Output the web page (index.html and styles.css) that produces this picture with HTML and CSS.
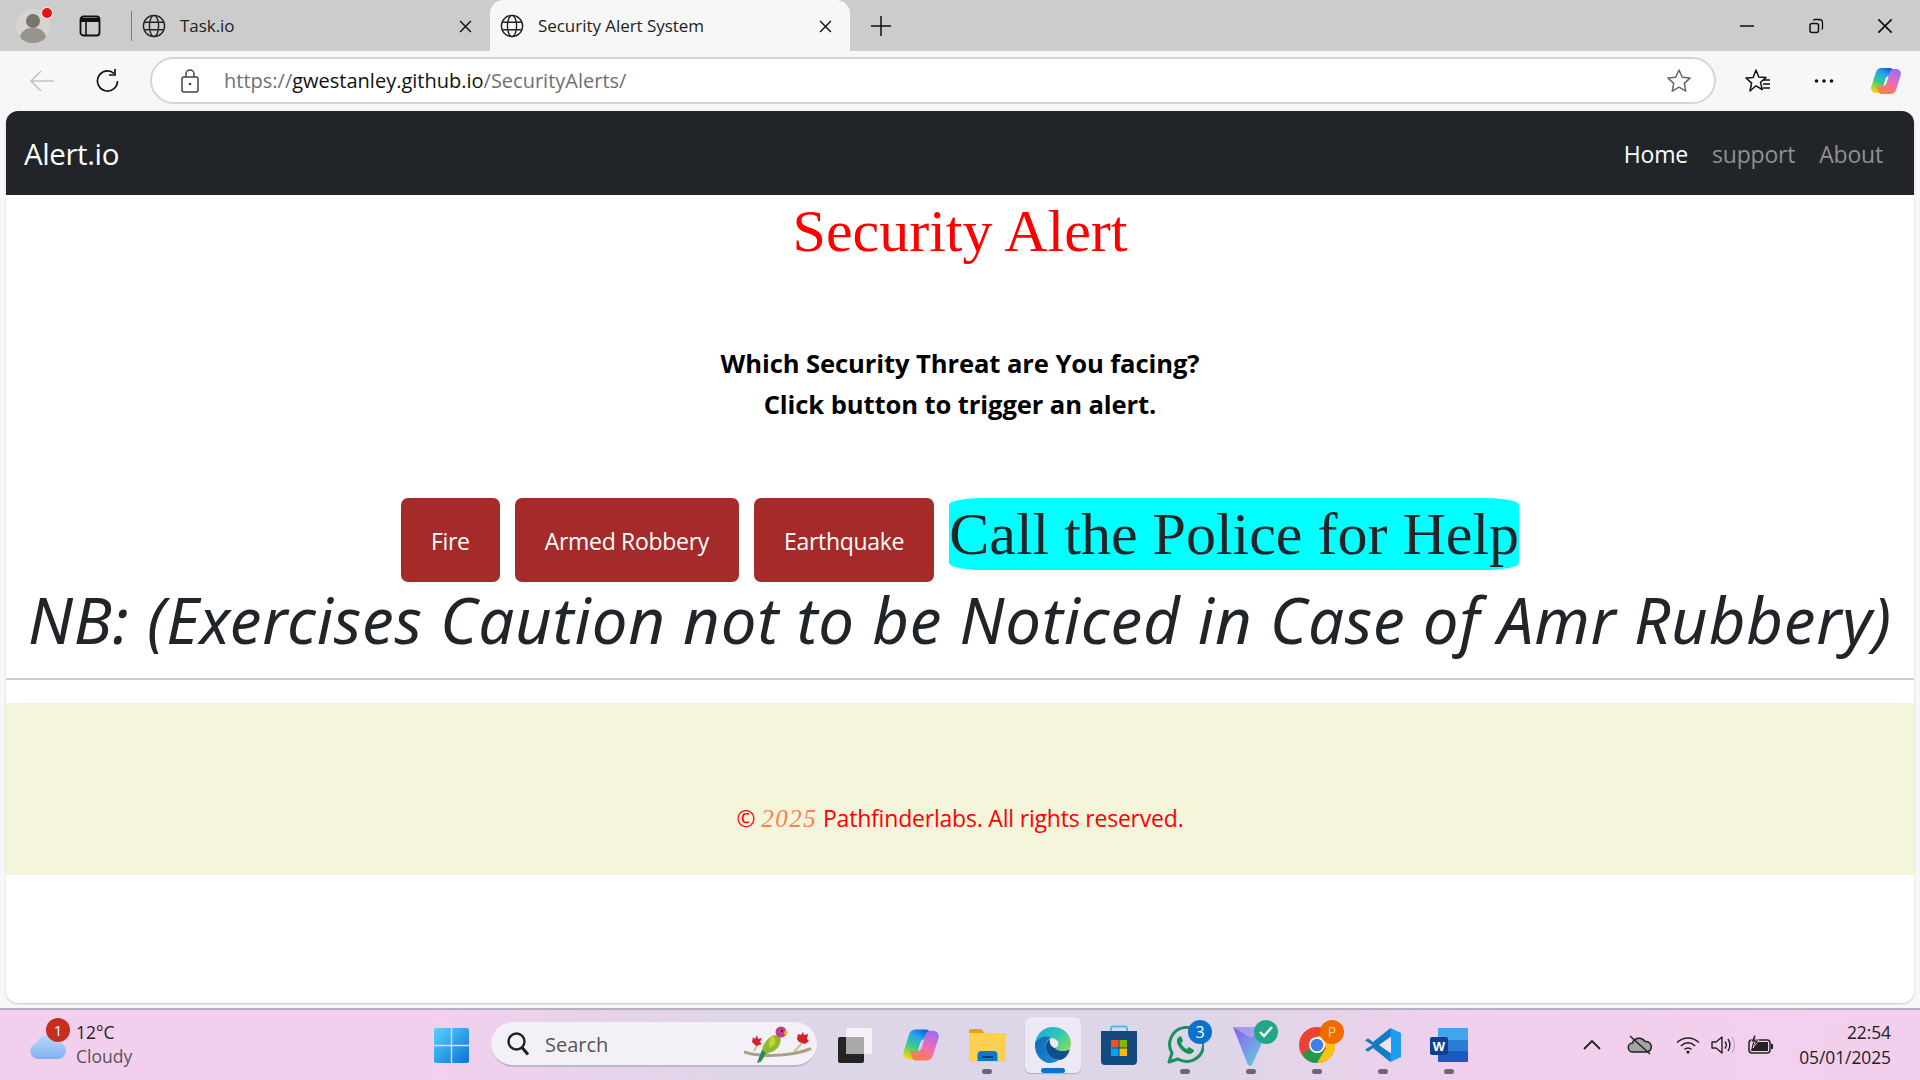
FILE: index.html
```html
<!DOCTYPE html>
<html lang="en">
<head>
<meta charset="utf-8">
<title>Security Alert System</title>
<link rel="stylesheet" href="styles.css">
</head>
<body>
<svg class="defs" width="0" height="0">
  <symbol id="globe" viewBox="0 0 24 24"><g fill="none" stroke="#222" stroke-width="1.4"><circle cx="12" cy="12" r="10.6"/><ellipse cx="12" cy="12" rx="4.6" ry="10.6"/><path d="M2.2 8.2h19.6M2.2 15.8h19.6"/></g></symbol>
  <symbol id="x" viewBox="0 0 12 12"><path d="M1 1l10 10M11 1L1 11" stroke="#111" stroke-width="1.3" fill="none"/></symbol>
  <linearGradient id="cp1" x1=".2" y1="1" x2=".7" y2="0"><stop offset="0" stop-color="#f7d708"/><stop offset=".4" stop-color="#3ec98a"/><stop offset=".75" stop-color="#22a5ee"/><stop offset="1" stop-color="#1261d6"/></linearGradient>
  <linearGradient id="cp2" x1=".7" y1="0" x2=".3" y2="1"><stop offset="0" stop-color="#9f6cf0"/><stop offset=".55" stop-color="#ef6fb0"/><stop offset="1" stop-color="#f8803a"/></linearGradient>
  <symbol id="copilot" viewBox="0 0 32 32"><path d="M12 3h8c2 0 3 1 3.500 2.500L25 11h-5c-2.500 0-4 1-4.600 3.200L12.500 24c-.8 2.800-2.500 4-4.500 4H6c-3.500 0-5.500-3-4.800-6L6 7c.8-2.500 3-4 6-4z" fill="url(#cp1)"/><path d="M20 29h-8c-2 0-3-1-3.500-2.500L7 21h5c2.500 0 4-1 4.600-3.200L19.500 8c.8-2.800 2.500-4 4.500-4h2c3.500 0 5.500 3 4.800 6L26 25c-.8 2.500-3 4-6 4z" fill="url(#cp2)"/></symbol>
</svg>

<header class="tabstrip">
  <div class="avatar">
    <svg width="36" height="36" viewBox="0 0 36 36"><circle cx="18" cy="18" r="17" fill="#d7d4cf"/><circle cx="18" cy="13" r="7" fill="#79746e"/><path d="M5 29c2-8 8-9 13-9s11 1 13 9c-3 4-8 6-13 6s-10-2-13-6z" fill="#98938d"/></svg>
    <span class="dot-red"></span>
  </div>
  <div class="sidebar-btn"><svg width="22" height="22" viewBox="0 0 22 22"><rect x="1.500" y="1.500" width="19" height="19" rx="3" fill="none" stroke="#111" stroke-width="1.800"/><path d="M2 3h18v4H2z" fill="#111"/><path d="M7 7v13" stroke="#111" stroke-width="1.600"/></svg></div>
  <span class="tab-divider"></span>
  <div class="tab">
    <svg class="tab-globe"><use href="#globe"/></svg><span class="tab-title">Task.io</span><svg class="tab-x"><use href="#x"/></svg>
  </div>
  <div class="tab tab-active">
    <svg class="tab-globe"><use href="#globe"/></svg><span class="tab-title">Security Alert System</span><svg class="tab-x"><use href="#x"/></svg>
  </div>
  <div class="newtab"><svg width="22" height="22" viewBox="0 0 22 22"><path d="M11 1v20M1 11h20" stroke="#111" stroke-width="1.500"/></svg></div>
  <div class="winctl">
    <span class="wc"><svg width="14" height="14" viewBox="0 0 14 14"><path d="M0 7h14" stroke="#111" stroke-width="1.500"/></svg></span>
    <span class="wc"><svg width="16" height="16" viewBox="0 0 16 16"><rect x="2" y="5.500" width="8.500" height="9" rx="2" fill="none" stroke="#111" stroke-width="1.500"/><path d="M5.500 2.500c0-.7.600-1 1.200-1H11c2 0 3.500 1.500 3.500 3.500v5c0 .7-.4 1.200-1 1.200" fill="none" stroke="#111" stroke-width="1.300"/></svg></span>
    <span class="wc"><svg width="16" height="16"><use href="#x"/></svg></span>
  </div>
</header>

<div class="toolbar">
  <span class="tb-btn tb-back"><svg width="26" height="24" viewBox="0 0 26 24"><path d="M25 12H2M12 2L2 12l10 10" fill="none" stroke="#c3c3c3" stroke-width="1.600"/></svg></span>
  <span class="tb-btn tb-reload"><svg width="26" height="26" viewBox="0 0 26 26"><path d="M22.500 13a10 10 0 1 1-3.500-7.600" fill="none" stroke="#111" stroke-width="1.700"/><path d="M20 1v6h-6" fill="none" stroke="#111" stroke-width="1.700"/></svg></span>
  <div class="addressbar">
    <svg class="lock" width="20" height="24" viewBox="0 0 20 24"><rect x="2" y="8" width="16" height="15" rx="2" fill="none" stroke="#444" stroke-width="1.500"/><path d="M6 8V5a4 4 0 0 1 8 0v3" fill="none" stroke="#444" stroke-width="1.500"/><circle cx="10" cy="15" r="1.300" fill="#444"/></svg>
    <span class="url"><span class="url-dim">https://</span>gwestanley.github.io<span class="url-dim">/SecurityAlerts/</span></span>
    <svg class="star" width="26" height="26" viewBox="0 0 26 26"><path d="M13 2l3.300 7.200 7.700.9-5.700 5.300 1.500 7.700L13 19.200l-6.800 3.900 1.500-7.700L2 10.100l7.700-.9z" fill="none" stroke="#666" stroke-width="1.500" stroke-linejoin="round"/></svg>
  </div>
  <span class="tb-btn tb-fav"><svg width="26" height="26" viewBox="0 0 26 26"><path d="M11 2l2.800 7 7.200.6-5.500 4.700 1.700 7.200L11 17.800 5 23l1.600-7.900L1 10l7.200-.6z" fill="none" stroke="#111" stroke-width="1.500" stroke-linejoin="round"/><path d="M18 12h7M18 16h7M18 20h7" stroke="#111" stroke-width="1.500"/></svg></span>
  <span class="tb-btn tb-more"><svg width="20" height="6" viewBox="0 0 20 6"><circle cx="2.500" cy="3" r="1.800" fill="#111"/><circle cx="10" cy="3" r="1.800" fill="#111"/><circle cx="17.500" cy="3" r="1.800" fill="#111"/></svg></span>
  <span class="tb-btn tb-cop"><svg width="34" height="32"><use href="#copilot"/></svg></span>
</div>

<div class="viewport">
  <main class="page">
    <nav class="navbar">
      <a class="brand">Alert.io</a>
      <div class="navlinks"><a class="nl nl-on">Home</a><a class="nl">support</a><a class="nl">About</a></div>
    </nav>
    <h1 class="title">Security Alert</h1>
    <p class="lead">Which Security Threat are You facing?<br>Click button to trigger an alert.</p>
    <div class="actions">
      <button class="btn">Fire</button>
      <button class="btn">Armed Robbery</button>
      <button class="btn">Earthquake</button>
      <button class="call">Call the Police for Help</button>
    </div>
    <p class="note">NB: (Exercises Caution not to be Noticed in Case of Amr Rubbery)</p>
    <hr class="rule">
    <footer class="foot">© <em class="year">2025</em> Pathfinderlabs. All rights reserved.</footer>
  </main>
</div>

<footer class="taskbar">
  <div class="weather">
    <span class="cloud">
      <svg width="38" height="26" viewBox="0 0 38 26"><defs><linearGradient id="cl" x1="0" y1="0" x2="0" y2="1"><stop offset="0" stop-color="#bcd6fb"/><stop offset="1" stop-color="#7fb0f2"/></linearGradient></defs><path d="M9 25a8 8 0 0 1-1.500-15.800A11 11 0 0 1 28 8a8.500 8.500 0 0 1 1 17z" fill="url(#cl)"/></svg>
      <span class="wbadge">1</span>
    </span>
    <span class="wtext"><span class="wtemp">12°C</span><span class="wcond">Cloudy</span></span>
  </div>
  <span class="start"><svg width="35" height="35" viewBox="0 0 35 35"><defs><linearGradient id="st" x1="0" y1="0" x2="1" y2="1"><stop offset="0" stop-color="#58d2fb"/><stop offset="1" stop-color="#0675d6"/></linearGradient></defs><path d="M0 2a2 2 0 0 1 2-2h14.800v16.800H0zM18.200 0H33a2 2 0 0 1 2 2v14.800H18.200zM0 18.200h16.800V35H2a2 2 0 0 1-2-2zM18.200 18.200H35V33a2 2 0 0 1-2 2H18.200z" fill="url(#st)"/></svg></span>
  <div class="search">
    <svg width="24" height="26" viewBox="0 0 24 26"><circle cx="10.500" cy="10.500" r="8" fill="none" stroke="#222" stroke-width="2.400"/><path d="M16 16.500l6 7" stroke="#222" stroke-width="3"/></svg>
    <span class="search-text">Search</span>
    <svg class="parrot" width="68" height="40" viewBox="0 0 68 40"><path d="M0 28C15 33 45 33 66 25" fill="none" stroke="#a9a08a" stroke-width="3" stroke-linecap="round"/><path d="M10 27l4-7M50 28l8-9" stroke="#c8c09a" stroke-width="2"/><path d="M8 18l1-5 2 2 2-4 1 4 4-1-2 4 2 2-6 2z" fill="#d6202e"/><path d="M53 15l1-5 3 1 2-3 1 3 4-1-1 5 2 2-4 3-6-2z" fill="#d6202e"/><path d="M13 39l5-13c1-6 5-12 12-15l6 1c2 6-1 12-6 15l-8 3-5 8z" fill="#8fb82c"/><path d="M13 39l5-13 4 3-5 8z" fill="#1f8a6a"/><path d="M28 12c3 1 4 4 3 8l-5 4c-2-3-1-9 2-12z" fill="#c5d23a"/><circle cx="37" cy="8" r="5.500" fill="#c63f86"/><path d="M41 6l3 2-2 4-2-2z" fill="#f0b01e"/><circle cx="38" cy="7" r="1" fill="#222"/></svg>
  </div>
  <div class="apps">
    <span class="app"><svg width="36" height="36" viewBox="0 0 36 36"><rect x="1" y="10" width="26" height="26" rx="2" fill="#242424"/><rect x="9" y="1" width="26" height="26" rx="2" fill="#f4f2f6" opacity=".92"/><rect x="9" y="10" width="18" height="17" fill="#a9a9a9"/></svg></span>
    <span class="app"><svg width="38" height="38"><use href="#copilot"/></svg></span>
    <span class="app app-dot"><svg width="37" height="34" viewBox="0 0 37 34"><path d="M0 3a2 2 0 0 1 2-2h10l4 4H0z" fill="#e0a40c"/><path d="M0 5h35a2 2 0 0 1 2 2v27H0z" fill="#fdd04f"/><path d="M8.500 33v-6a4 4 0 0 1 4-4h12a4 4 0 0 1 4 4v6z" fill="#0a79cc"/><path d="M13 29h11" stroke="#063f74" stroke-width="2"/></svg></span>
    <span class="app app-active"><svg width="38" height="38" viewBox="0 0 38 38"><defs><linearGradient id="e1" x1="0" y1="0" x2="1" y2=".7"><stop offset="0" stop-color="#1ba7dc"/><stop offset=".6" stop-color="#2fc8b8"/><stop offset="1" stop-color="#7fd860"/></linearGradient><linearGradient id="e2" x1="0" y1="0" x2="1" y2="1"><stop offset="0" stop-color="#0c6ab8"/><stop offset="1" stop-color="#1a8ad4"/></linearGradient></defs><path d="M1 17C3 7 10 1 19 1c10 0 18 7 18 17 0 5-4 7-9 7-3 0-6-1-7-3 3-1 4-3 3-6-2-4-7-5-12-3C7 14 3 16 1 17z" fill="url(#e1)"/><path d="M1 17c4-6 11-8 16-5-4 2-6 6-5 11 1 6 6 10 13 11-3 2-6 3-9 3C8 37 0 29 1 17z" fill="url(#e2)"/><path d="M21 22c1 2 4 3 7 3 3 0 6-.5 8-2-2 7-6 11-11 11-7-1-12-5-13-11-1-4 1-8 4-10-1 4 1 8 5 9z" fill="#0f4f8f"/></svg><i class="underline"></i></span>
    <span class="app"><svg width="36" height="40" viewBox="0 0 36 40"><path d="M10 9V3.500a2 2 0 0 1 2-2h12a2 2 0 0 1 2 2V9" fill="none" stroke="#3cc4ee" stroke-width="2"/><path d="M0 6h36v30a4 4 0 0 1-4 4H4a4 4 0 0 1-4-4z" fill="#154a7f"/><rect x="10" y="15" width="7.500" height="7.500" fill="#f25022"/><rect x="18.500" y="15" width="7.500" height="7.500" fill="#7fba00"/><rect x="10" y="23.500" width="7.500" height="7.500" fill="#00a4ef"/><rect x="18.500" y="23.500" width="7.500" height="7.500" fill="#ffb900"/></svg></span>
    <span class="app app-dot"><svg width="38" height="38" viewBox="0 0 38 38"><path d="M3 36l3-9A17 17 0 1 1 12 33z" fill="none" stroke="#17915a" stroke-width="3" stroke-linejoin="round"/><path d="M13 11c-2 1-3 4-1 8 2 4 6 8 11 9 3 0 5-2 5-4l-5-3-2 2c-3-1-5-4-6-6l2-2-2-5z" fill="#17915a"/></svg><span class="badge badge-blue">3</span></span>
    <span class="app app-dot"><svg width="36" height="42" viewBox="0 0 36 42"><defs><linearGradient id="pv" x1="0" y1="0" x2="1" y2="1"><stop offset="0" stop-color="#8a5cf0"/><stop offset="1" stop-color="#5de0d8"/></linearGradient></defs><path d="M0 3l15 38c1 1 3 1 4 0L36 3z" fill="url(#pv)"/><path d="M0 3h36L18 14z" fill="#b4a0f8" opacity=".8"/></svg><span class="badge badge-green"><svg width="14" height="12" viewBox="0 0 14 12"><path d="M1 6l4 4 8-9" fill="none" stroke="#fff" stroke-width="2.400"/></svg></span></span>
    <span class="app app-dot"><svg width="36" height="36" viewBox="0 0 36 36"><circle cx="18" cy="18" r="18" fill="#e94335"/><path d="M18 18L3 27a18 18 0 0 0 15 9l8-13z" fill="#1e9c48"/><path d="M18 9h16a18 18 0 0 1-16 27l9-15z" fill="#fbc116"/><circle cx="18" cy="18" r="8" fill="#fff"/><circle cx="18" cy="18" r="6.300" fill="#3f7fe8"/></svg><span class="badge badge-orange">P</span></span>
    <span class="app app-dot"><svg width="36" height="36" viewBox="0 0 36 36"><path d="M25.500 1L36 6v24l-10.500 5L8 18.500z" fill="#1f9cf0"/><path d="M25.500 1v34L8 21l-5 3.800L0 22.500 7.500 18 0 13.500l3-2.300L8 15z" fill="#0f7cc4"/><path d="M26 9.500L14 18l12 8.500z" fill="#eee3f0"/></svg></span>
    <span class="app app-dot"><svg width="38" height="34" viewBox="0 0 38 34"><rect x="8" y="0" width="30" height="11.500" fill="#41a5ee"/><rect x="8" y="11.500" width="30" height="11.500" fill="#2b7cd3"/><rect x="8" y="23" width="30" height="11" rx="1" fill="#185abd"/><rect x="0" y="9" width="18" height="18" rx="2" fill="#103f91"/><text x="9" y="23" class="wordw">W</text></svg></span>
  </div>
  <div class="tray">
    <span class="tray-i ti-chev"><svg width="18" height="10" viewBox="0 0 18 10"><path d="M1 9l8-8 8 8" fill="none" stroke="#222" stroke-width="1.800"/></svg></span>
    <span class="tray-i ti-cloud"><svg width="26" height="20" viewBox="0 0 26 20"><path d="M6 17a4.500 4.500 0 0 1-.5-9A7 7 0 0 1 18 6.500 5.300 5.300 0 0 1 20 17z" fill="#a4a2a2" stroke="#222" stroke-width="1.500"/><path d="M3 1l20 18" stroke="#222" stroke-width="1.500"/></svg></span>
    <span class="tray-i ti-wifi"><svg width="24" height="18" viewBox="0 0 24 18"><g fill="none" stroke="#222" stroke-width="1.500"><path d="M1 6.500c6.500-6 15.500-6 22 0M4.800 10c4.500-4 9.900-4 14.400 0M8.500 13.400c2.200-1.800 4.800-1.800 7 0"/></g><circle cx="12" cy="16" r="1.600" fill="#222"/></svg></span>
    <span class="tray-i ti-vol"><svg width="24" height="20" viewBox="0 0 24 20"><path d="M1 7v6h4l6 5V2L5 7z" fill="none" stroke="#222" stroke-width="1.400" stroke-linejoin="round"/><path d="M14 6.500c1.500 2 1.500 5 0 7" fill="none" stroke="#222" stroke-width="1.400"/><path d="M17 4c2.500 3.500 2.500 8.500 0 12" fill="none" stroke="#222" stroke-width="1.400"/><path d="M21 2c3.200 5 3.200 11 0 16" fill="none" stroke="#b9a9bb" stroke-width="1.200"/></svg></span>
    <span class="tray-i ti-bat"><svg width="26" height="22" viewBox="0 0 26 22"><rect x="1" y="6" width="21" height="13" rx="3" fill="none" stroke="#222" stroke-width="1.500"/><path d="M5 8h15v9H3z" fill="#222"/><path d="M23 10h2v5h-2z" fill="#222"/><path d="M6 1L3 8h4l-2 6 6-8H7l1-5z" fill="#222" stroke="#f2d0ee" stroke-width=".8"/></svg></span>
    <div class="clock"><span>22:54</span><span>05/01/2025</span></div>
  </div>
</footer>
</body>
</html>
```

FILE: styles.css
```css
* { box-sizing: border-box; }
html, body { margin: 0; height: 100%; }
body { width: 1920px; height: 1080px; overflow: hidden; display: flex; flex-direction: column; font-family: "Open Sans", "Noto Sans", sans-serif; background: #f7f7f7; }
.defs { position: absolute; }

/* Browser tab strip */
.tabstrip { height: 51px; background: #cccccc; display: flex; align-items: center; flex: none; }
.avatar { width: 36px; height: 36px; margin-left: 15px; position: relative; }
.avatar svg { display: block; }
.dot-red { position: absolute; left: 27px; top: 0; width: 10px; height: 10px; border-radius: 50%; background: #e81010; box-shadow: 0 0 0 1px #eee; }
.sidebar-btn { margin-left: 28px; width: 22px; height: 22px; }
.sidebar-btn svg { display: block; }
.tab-divider { width: 1px; height: 30px; background: #7b7b7b; margin-left: 30px; }
.tab { width: 358px; height: 51px; flex: none; display: flex; align-items: center; padding: 0 18px 0 10px; color: #222; }
.tab-active { width: 360px; background: #f7f7f7; border-radius: 14px 14px 0 0; }
.tab-globe { width: 24px; height: 24px; flex: none; }
.tab-title { font-size: 17px; margin-left: 14px; flex: 1; letter-spacing: -.05px; white-space: nowrap; margin-top: -1px; }
.tab-x { width: 13px; height: 13px; flex: none; margin-top: 2px; }
.newtab { margin-left: 20px; width: 22px; height: 22px; }
.newtab svg { display: block; }
.winctl { margin-left: auto; display: flex; align-items: center; padding-right: 27px; gap: 53px; }
.wc { width: 16px; height: 16px; display: flex; align-items: center; justify-content: center; }

/* Browser toolbar */
.toolbar { height: 60px; flex: none; display: flex; align-items: center; background: #f7f7f7; }
.tb-btn { display: flex; align-items: center; justify-content: center; flex: none; }
.tb-back { width: 26px; margin-left: 29px; }
.tb-reload { width: 26px; margin-left: 40px; }
.addressbar { width: 1566px; height: 47px; margin-left: 29px; margin-top: -1px; border: 2px solid #d5d5d5; border-radius: 24px; background: #fff; display: flex; align-items: center; padding-left: 28px; padding-right: 22px; }
.lock { flex: none; }
.url { font-size: 20px; margin-left: 24px; color: #111; flex: 1; white-space: nowrap; }
.url-dim { color: #6f6f6f; }
.tb-fav { width: 26px; margin-left: 29px; }
.tb-more { width: 20px; margin-left: 43px; }
.tb-cop { width: 34px; margin-left: 35px; }

/* Page */
.viewport { height: 892px; flex: none; padding: 0 6px; }
.page { height: 100%; background: #fff; border-radius: 12px; overflow: hidden; display: flex; flex-direction: column; box-shadow: 0 1px 2px rgba(0,0,0,.2); color: #212529; }
.navbar { height: 84px; flex: none; background: #212529; display: flex; align-items: center; justify-content: space-between; padding: 1px 31px 0 18px; }
.brand { font-size: 29.500px; color: #fff; letter-spacing: -.4px; }
.navlinks { display: flex; gap: 24px; }
.nl { font-size: 23px; color: #8e9093; letter-spacing: -.2px; }
.nl-on { color: #fff; }
.title { margin: 0; font: 400 60px/68px "Liberation Serif", serif; color: #ff0000; text-align: center; padding-top: 2px; }
.lead { margin: 78px 0 0; font-size: 25.600px; line-height: 41px; font-weight: 700; color: #000; text-align: center; letter-spacing: -.1px; }
.actions { margin-top: 73px; display: flex; justify-content: center; align-items: flex-start; gap: 15px; }
.btn { height: 84px; padding: 2px 30px 0; border: 0; border-radius: 7px; background: #a52a2a; color: #fff; font: 400 23px "Open Sans", sans-serif; letter-spacing: -.3px; }
.call { height: 72px; padding: 0; border: 0; border-radius: 34px / 7px; background: #00ffff; color: #212529; font: 400 60px/72px "Liberation Serif", serif; }
.note { margin: -1px 0 0; font: italic 400 63.500px/78px "Noto Sans", sans-serif; letter-spacing: .8px; color: #212529; text-align: center; white-space: nowrap; }
.rule { margin: 19px 0 0; border: 0; border-top: 2px solid #cfcfcf; }
.foot { margin-top: 23px; height: 172px; flex: none; background: #f5f5dc; color: #ff0000; font-size: 23px; text-align: center; padding-top: 98px; line-height: 34px; letter-spacing: -.2px; }
.year { font-family: "Liberation Serif", serif; color: #ff7f50; font-size: 25px; letter-spacing: 1.500px; }

/* Taskbar */
.taskbar { height: 72px; margin-top: 5px; flex: none; border-top: 2px solid #b7afbb; background: linear-gradient(90deg, #f3cfee 0%, #f3cfee 22%, #dcd6e8 40%, #dcd6e8 62%, #f0d0ec 76%, #f3cfee 100%); display: flex; align-items: center; }
.weather { width: 434px; display: flex; align-items: center; padding-left: 29px; flex: none; }
.cloud { position: relative; width: 38px; height: 26px; margin-top: 3px; }
.cloud svg { display: block; }
.wbadge { position: absolute; left: 17px; top: -16px; width: 24px; height: 24px; border-radius: 50%; background: #c62f1f; color: #fff; font-size: 15px; line-height: 24px; text-align: center; }
.wtext { display: flex; flex-direction: column; margin-left: 9px; font-size: 17.500px; line-height: 24px; margin-top: -3px; }
.wtemp { color: #222; }
.wcond { color: #555; }
.start { width: 35px; height: 35px; flex: none; margin-top: 1px; }
.start svg { display: block; }
.search { width: 326px; height: 45px; margin-left: 22px; margin-top: -1px; flex: none; border-radius: 23px; background: #f4f0f8; border-bottom: 2px solid #bdb6c6; display: flex; align-items: center; padding-left: 15px; padding-right: 5px; }
.search-text { font-size: 20px; color: #555; margin-left: 15px; margin-top: 1px; flex: 1; }
.apps { display: flex; margin-left: 5px; flex: none; }
.app { position: relative; width: 66px; height: 56px; display: flex; align-items: center; justify-content: center; }
.app-dot::after { content: ""; position: absolute; left: 28px; bottom: -1px; width: 10px; height: 5px; border-radius: 3px; background: #6a6570; }
.app-active { background: #ece8f4; border-radius: 6px; box-shadow: 0 1px 1px rgba(0,0,0,.2); width: 56px; margin: 0 5px; }
.underline { position: absolute; left: 16px; bottom: 0; width: 24px; height: 5px; border-radius: 3px; background: #0a72d0; }
.badge { position: absolute; left: 36px; top: 3px; width: 24px; height: 24px; border-radius: 50%; color: #fff; font-size: 16px; line-height: 24px; text-align: center; display: flex; align-items: center; justify-content: center; }
.badge-blue { background: #0a72cc; }
.badge-green { background: #22a884; }
.badge-orange { background: #ef6c00; font-size: 14px; color: #fbd0a0; }
.wordw { font: 700 13px "Liberation Sans", sans-serif; fill: #fff; text-anchor: middle; }
.tray { margin-left: auto; display: flex; align-items: center; padding-right: 29px; }
.tray-i { display: flex; align-items: center; justify-content: center; }
.ti-chev { width: 18px; }
.ti-cloud { width: 26px; margin-left: 26px; }
.ti-wifi { width: 24px; margin-left: 23px; }
.ti-vol { width: 24px; margin-left: 11px; }
.ti-bat { width: 26px; margin-left: 13px; }
.clock { margin-left: 25px; display: flex; flex-direction: column; align-items: flex-end; font-size: 17.400px; line-height: 25px; color: #222; letter-spacing: -.05px; }
```
